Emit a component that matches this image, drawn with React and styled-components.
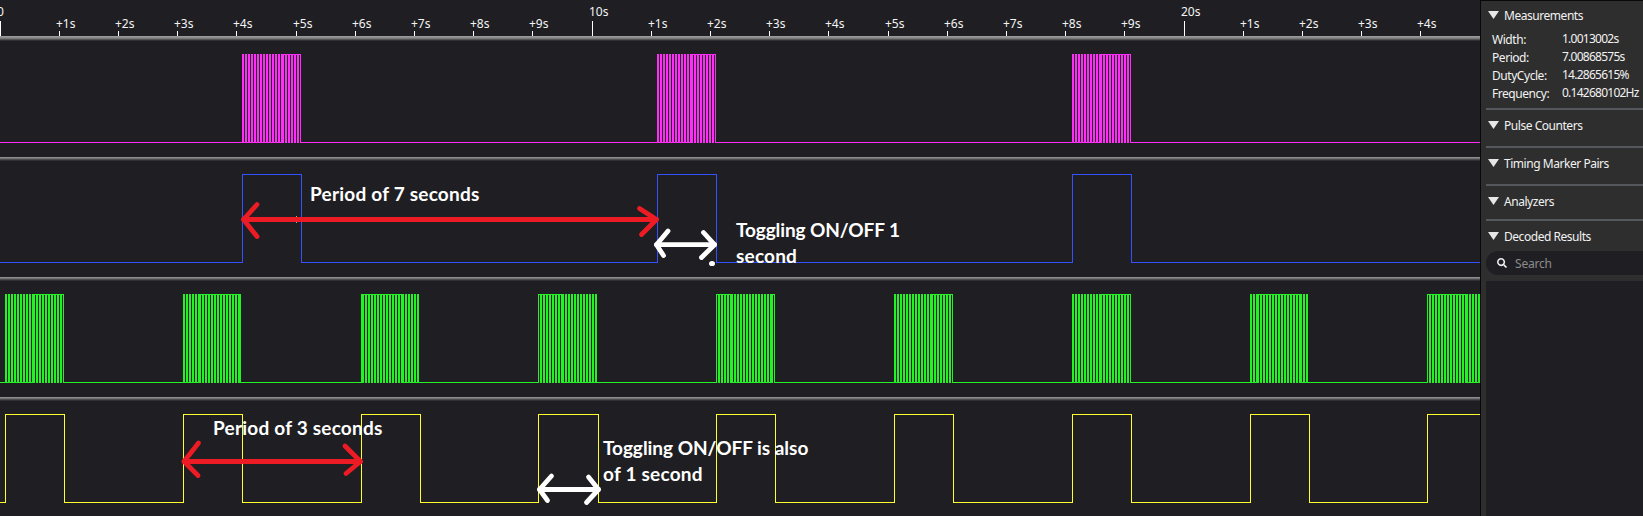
import React from "react";
import styled, { createGlobalStyle } from "styled-components";
import { FaSearch } from "react-icons/fa";

const GlobalStyle = createGlobalStyle`
  * { box-sizing: border-box; }
  body { margin: 0; background: #1f1f23; overflow: hidden; }
`;

const Screen = styled.div`
  display: flex;
  width: 1643px;
  height: 516px;
  overflow: hidden;
  background: #1f1f23;
  font-family: "Noto Sans", sans-serif;
`;

const Timeline = styled.main`
  display: flex;
  flex-direction: column;
  width: 1480px;
  flex: none;
  overflow: hidden;
`;

const Ruler = styled.header`
  position: relative;
  height: 36px;
  flex: none;
  overflow: hidden;
`;

const TickLabel = styled.span`
  position: absolute;
  left: ${(p) => p.$x}px;
  top: ${(p) => (p.$major ? 3 : 15)}px;
  font-size: 12px;
  line-height: 17px;
  color: #f4f4f4;
  white-space: nowrap;
`;

const Divider = styled.div`
  flex: none;
  height: ${(p) => (p.$thick ? 5 : 4)}px;
  background: ${(p) =>
    p.$thick
      ? "linear-gradient(#999 0 1px, #8d8d8d 1px 2px, #777 2px 3px, #555 3px 4px, #303034 4px)"
      : "linear-gradient(#8d8d8f 0 1px, #707072 1px 2px, #4c4c4f 2px 3px, #303034 3px)"};
`;

const Lane = styled.section`
  position: relative;
  height: 116px;
  flex: none;
`;

const Drawing = styled.svg`
  display: block;
  width: 1480px;
  height: ${(p) => p.$h}px;
  overflow: visible;
`;

const Overlay = styled(Drawing)`
  position: absolute;
  inset: 0;
`;

const Note = styled.p`
  position: absolute;
  left: ${(p) => p.$x}px;
  top: ${(p) => p.$y}px;
  margin: 0;
  font: bold 19px/26px Lato, sans-serif;
  color: #fff;
  white-space: nowrap;
`;

const NoteLine = styled.span`
  display: block;
  letter-spacing: ${(p) => p.$track || 0}px;
`;

const Sidebar = styled.aside`
  display: flex;
  flex-direction: column;
  flex: 1;
  min-width: 0;
  padding-left: 5px;
  background: #2e2e2e;
  border-left: 1px solid #08080a;
  border-top: 1px solid #08080a;
  color: #f2f2f2;
  font-size: 12px;
`;

const Section = styled.section`
  flex: none;
  height: ${(p) => p.$h}px;
  padding-top: ${(p) => p.$pad}px;
  border-bottom: ${(p) => (p.$last ? "none" : "2px solid #54575b")};
`;

const Heading = styled.h2`
  display: flex;
  align-items: center;
  gap: 5px;
  height: 16px;
  margin: 0;
  padding-left: 2px;
  font-size: 12px;
  font-weight: 400;
  letter-spacing: -0.46px;
  white-space: nowrap;
`;

const Caret = styled.i`
  width: 11px;
  height: 8px;
  background: #e6e6e6;
  clip-path: polygon(0 0, 100% 0, 50% 100%);
`;

const Stats = styled.dl`
  display: grid;
  grid-template-columns: 70px auto;
  grid-auto-rows: 18px;
  margin: 8px 0 0;
  padding-left: 6px;
  line-height: 18px;
  white-space: nowrap;
`;

const StatName = styled.dt`
  letter-spacing: -0.45px;
`;

const StatValue = styled.dd`
  margin: -1px 0 0;
  letter-spacing: -0.75px;
`;

const SearchBox = styled.label`
  display: flex;
  align-items: center;
  gap: 8px;
  flex: none;
  height: 24px;
  margin-bottom: 6px;
  padding-left: 11px;
  border-radius: 12px 0 0 12px;
  background: #1f1f23;
  color: #8c8c8c;
  letter-spacing: -0.2px;
  svg { color: #eee; }
`;

const Results = styled.div`
  flex: 1;
  background: #1f1f23;
`;

const TOP = 13;
const LOW = 101;

const SECONDS = Array.from({ length: 25 }, (_, i) => i);

// [first, last] pixel columns of each high phase
const SLOW = [[242, 301], [657, 716], [1072, 1131]];
const FAST = [
  [5, 64], [183, 242], [361, 420], [538, 598], [716, 775],
  [894, 953], [1072, 1131], [1250, 1309], [1427, 1490],
];

// start, end, then runs of one-pixel gaps: level, first column, last column
const MAGENTA = [
  [242, 301, ["l", 244, 280], ["h", 284, 299]],
  [657, 716, ["l", 659, 689], ["h", 693, 714]],
  [1072, 1131, ["l", 1074, 1098], ["h", 1102, 1129]],
];
const GREEN = [
  [5, 64, ["l", 7, 31], ["h", 35, 62]],
  [183, 241, ["l", 185, 197], ["h", 201, 237]],
  [361, 419, ["h", 364, 400], ["l", 404, 416]],
  [538, 597, ["h", 539, 560], ["l", 564, 594]],
  [716, 775, ["h", 717, 729], ["l", 733, 769], ["h", 773, 773]],
  [894, 953, ["l", 896, 929], ["h", 933, 951]],
  [1072, 1131, ["l", 1074, 1098], ["h", 1102, 1129]],
  [1250, 1308, ["l", 1252, 1255], ["h", 1259, 1298], ["l", 1302, 1305]],
  [1427, 1480, ["h", 1428, 1464], ["l", 1468, 1477]],
];

function SquareWave({ pulses, color }) {
  const d = pulses
    .map(([a, b]) => `H${a + 0.5}V${TOP + 0.5}H${b + 0.5}V${LOW + 0.5}`)
    .join("");
  return (
    <Drawing $h={115}>
      <path d={`M-1 ${LOW + 0.5}${d}H1480`} fill="none" stroke={color} shapeRendering="crispEdges" />
    </Drawing>
  );
}

function BurstWave({ bursts, color }) {
  let line = `M0 ${LOW}H1480V${LOW + 1}H0Z`;
  let gaps = "";
  bursts.forEach(([a, b, ...runs]) => {
    line += `M${a} ${TOP}H${b}V${LOW + 1}H${a}Z`;
    runs.forEach(([level, from, to]) => {
      const y = level === "l" ? TOP : TOP + 1;
      for (let x = from; x <= to; x += 3) gaps += `M${x} ${y}h1v${LOW - TOP}h-1z`;
    });
  });
  return (
    <Drawing $h={116} shapeRendering="crispEdges">
      <path d={line} fill={color} />
      <path d={gaps} fill="#1f1f23" />
    </Drawing>
  );
}

function Arrow({ color, y, from, to, left, right }) {
  return (
    <g stroke={color} strokeWidth="4.8" fill="none" strokeLinecap="round" strokeLinejoin="round">
      <path d={`M${from} ${y}H${to}`} />
      <path d={`M${left[0]} ${left[1]}L${from} ${y}L${left[2]} ${left[3]}`} />
      <path d={`M${right[0]} ${right[1]}L${to} ${y}L${right[2]} ${right[3]}`} />
    </g>
  );
}

function Group({ title, ...rest }) {
  return (
    <Section {...rest}>
      <Heading><Caret />{title}</Heading>
    </Section>
  );
}

const STATS = [
  ["Width:", "1.0013002s"],
  ["Period:", "7.00868575s"],
  ["DutyCycle:", "14.2865615%"],
  ["Frequency:", "0.142680102Hz"],
];

export default function App() {
  return (
    <Screen>
      <GlobalStyle />
      <Timeline>
        <Ruler>
          <Drawing $h={36} shapeRendering="crispEdges">
            {SECONDS.map((s) => {
              const y = s % 10 ? 31 : 21;
              return <rect key={s} x={Math.floor(s * 59.2)} y={y} width="1" height={36 - y} fill="#fff" />;
            })}
          </Drawing>
          {SECONDS.map((s) => (
            <TickLabel key={s} $major={s % 10 === 0} $x={Math.floor(s * 59.2) - 3}>
              {s === 0 ? "0" : s % 10 ? `+${s % 10}s` : `${s}s`}
            </TickLabel>
          ))}
        </Ruler>
        <Divider $thick />
        <Lane><BurstWave bursts={MAGENTA} color="#ff2df7" /></Lane>
        <Divider />
        <Lane>
          <SquareWave pulses={SLOW} color="#3251ff" />
          <Overlay $h={116}>
            <path d="M296.5 55v7" stroke="#aaa" />
            <Arrow color="#ed1c24" y={58.5} from={243.5} to={656.5} left={[257, 43.5, 257, 75.5]} right={[639.5, 47.5, 641.5, 73.5]} />
            <Arrow color="#fff" y={83.7} from={656.5} to={714.5} left={[668, 70, 663.5, 94.5]} right={[703.5, 71.5, 701.5, 96.5]} />
            <ellipse cx="712" cy="102.5" rx="3" ry="2.6" fill="#fff" />
          </Overlay>
          <Note $x={310} $y={20}><NoteLine $track={0.22}>Period of 7 seconds</NoteLine></Note>
          <Note $x={736} $y={56}>
            <NoteLine $track={-0.1}>Toggling ON/OFF 1</NoteLine>
            <NoteLine $track={0.2}>second</NoteLine>
          </Note>
        </Lane>
        <Divider />
        <Lane><BurstWave bursts={GREEN} color="#24f224" /></Lane>
        <Divider />
        <Lane>
          <SquareWave pulses={FAST} color="#ffff2d" />
          <Overlay $h={115}>
            <Arrow color="#ed1c24" y={60.5} from={184} to={360.5} left={[198.5, 42, 198, 74.5]} right={[345, 45, 346, 72.5]} />
            <Arrow color="#fff" y={88.5} from={539.5} to={598.5} left={[551.5, 75, 547.5, 99.5]} right={[588.5, 76, 586.5, 101.5]} />
          </Overlay>
          <Note $x={213} $y={14}><NoteLine $track={0.22}>Period of 3 seconds</NoteLine></Note>
          <Note $x={603} $y={34}>
            <NoteLine $track={-0.03}>Toggling ON/OFF is also</NoteLine>
            <NoteLine $track={0.22}>of 1 second</NoteLine>
          </Note>
        </Lane>
      </Timeline>
      <Sidebar>
        <Section $h={109} $pad={6}>
          <Heading><Caret />Measurements</Heading>
          <Stats>
            {STATS.map(([name, value]) => (
              <React.Fragment key={name}>
                <StatName>{name}</StatName>
                <StatValue>{value}</StatValue>
              </React.Fragment>
            ))}
          </Stats>
        </Section>
        <Group title="Pulse Counters" $h={38} $pad={7} />
        <Group title="Timing Marker Pairs" $h={38} $pad={7} />
        <Group title="Analyzers" $h={35} $pad={7} />
        <Group title="Decoded Results" $h={30} $pad={7} $last />
        <SearchBox><FaSearch size={10} />Search</SearchBox>
        <Results />
      </Sidebar>
    </Screen>
  );
}
